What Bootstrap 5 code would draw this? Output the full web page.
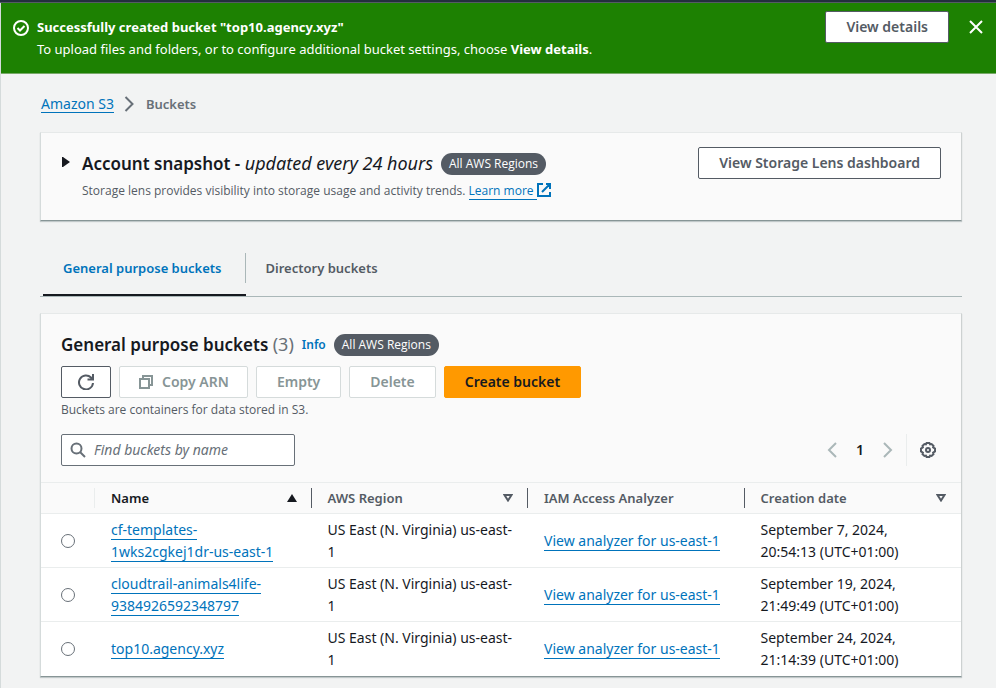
<!DOCTYPE html>
<html lang="en">
<head>
<meta charset="utf-8">
<meta name="viewport" content="width=device-width, initial-scale=1">
<title>S3 buckets</title>
<link href="https://cdn.jsdelivr.net/npm/bootstrap@5.3.0/dist/css/bootstrap.min.css" rel="stylesheet">
<style>
  body { font-family: "Noto Sans", "Open Sans", sans-serif; font-size: 14px; line-height: 22px; color: #16191f; background: #f2f3f3; }
  svg { display: block; flex: none; fill: none; stroke: currentColor; stroke-width: 2; }
  .console-bar { height: 3px; background: #232f3e; border-bottom: 1px solid #545b64; }
  .console-main { border-left: 1px solid #d5dbdb; min-height: calc(100vh - 3px); }
  .flash { background: #1d8102; color: #fff; padding: 13px 13px 13px 12px; border-bottom: 1px solid #78a968; font-size: 13px; }
  .flash-actions { margin-top: -5px; }
  .flash-close { color: #e3eee0; }
  .content-area { padding: 19px 34px 12px 39px; }
  .link-a { color: #0073bb; text-decoration: none; border-bottom: 1px solid #0073bb; }
  .link-a:hover { color: #0a4a74; }
  .crumbs { padding-left: 1px; margin-bottom: 17px; }
  .crumb-current { color: #687078; font-weight: 600; font-size: 13px; }
  .crumb-sep { color: #687078; }
  .btn-c { --bs-btn-font-size: 14px; --bs-btn-font-weight: 600; --bs-btn-line-height: 22px; --bs-btn-padding-y: 4px; --bs-btn-padding-x: 20px;
    --bs-btn-border-radius: 2px; --bs-btn-color: #545b64; --bs-btn-bg: #fff; --bs-btn-border-color: #545b64;
    --bs-btn-hover-color: #16191f; --bs-btn-hover-bg: #fafafa; --bs-btn-hover-border-color: #16191f;
    --bs-btn-disabled-color: #879596; --bs-btn-disabled-bg: #fff; --bs-btn-disabled-border-color: #d5dbdb; --bs-btn-disabled-opacity: 1; }
  .btn-copy { --bs-btn-padding-x: 18px; }
  .btn-create { --bs-btn-color: #16191f; --bs-btn-bg: #ff9900; --bs-btn-border-color: #ff9900; --bs-btn-hover-bg: #ec7211; --bs-btn-hover-border-color: #ec7211; }
  .btn-plain { border: 0; background: none; padding: 0; color: inherit; }
  .panel { background: #fafafa; border: 1px solid #e6e9e9; border-right-color: #cdd1d1; border-left-color: #d5dbdb; border-bottom-color: #879596; box-shadow: 0 1px 1px rgba(0,28,36,.2); }
  .panel-head { padding: 14px 20px 16px; }
  .expander { margin-top: 10px; }
  .title { font-size: 17px; line-height: 22px; font-weight: 600; margin: 0; }
  .title em { font-weight: 400; font-size: 18px; }
  .pill { background: #545b64; color: #fff; font-family: "Open Sans", sans-serif; font-size: 12px; line-height: 22px; padding: 0 8px; border-radius: 11px; font-weight: 500; }
  .desc { font-family: "Open Sans", sans-serif; font-size: 12px; line-height: 16px; color: #545b64; }
  .snapshot-title { margin: 5px 0 8px; }
  .tabs { margin-top: 24px; border-bottom: 1px solid #aab7b8; padding: 8px 0 0 3px; font-size: 13px; }
  .tab { padding: 0 23px 0 20px; font-weight: 600; color: #545b64; line-height: 30px; border-right: 1px solid #aab7b8; margin-bottom: 13px; }
  .tab-wrap:last-child .tab { border-right-color: transparent; }
  .tab-wrap.active .tab { color: #0073bb; }
  .tab-wrap.active { border-bottom: 2px solid #16191f; }
  .tab-wrap.active .tab { margin-bottom: 11px; }
  .buckets-panel { margin-top: 16px; }
  .buckets-head { padding: 19px 20px 16px; }
  .toolbar { margin-top: 10px; }
  .count { color: #687078; font-weight: 400; font-size: 18px; }
  .info { font-size: 12px; font-weight: 600; color: #0073bb; text-decoration: none; }
  .search { width: 234px; height: 32px; background: #fff; border: 1px solid #687078; border-radius: 2px; padding: 0 8px; color: #687078; }
  .search input { border: 0; outline: 0; background: none; font-size: 14px; color: #16191f; min-width: 0; }
  .search input::placeholder { font-style: italic; color: #687078; opacity: 1; }
  .pager { color: #aab7b8; }
  .pager-page { width: 46px; text-align: center; color: #16191f; font-weight: 600; }
  .settings { border-left: 1px solid #eaeded; color: #545b64; padding: 8px 5px 8px 13px; margin-left: 13px; }
  .bucket-table { table-layout: fixed; width: 100%; margin: 0; }
  .bucket-table th, .bucket-table td { padding: 5px 8px 4px 16px; vertical-align: middle; border-bottom: 1px solid #eaeded; }
  .bucket-table th { padding: 5px 0; border-top: 1px solid #eaeded; background: #fafafa; color: #545b64; font-size: 13px; font-weight: 600; }
  .bucket-table td { background: #fff; }
  .bucket-table tr:last-child td { border-bottom-color: #fff; }
  .bucket-table .pick { width: 54px; }
  .bucket-table td.pick { padding: 0 0 0 20px; }
  .head-cell { height: 20px; line-height: 20px; padding: 0 14px 0 16px; border-right: 1px solid #545b64; }
  .pick .head-cell { border-color: #eaeded; }
  th:last-child .head-cell { border-color: transparent; }
  .bucket-table .sorted { color: #16191f; }
  .pick input { display: block; width: 14px; height: 14px; margin: 0; appearance: none; border: 1px solid #687078; border-radius: 50%; background: #fff; }
  .pick input:checked { border: 4px solid #0073bb; }
</style>
<script src="https://cdn.jsdelivr.net/npm/bootstrap@5.3.0/dist/js/bootstrap.bundle.min.js"></script>
</head>
<body>
<div class="console-bar"></div>
<main class="console-main">
  <section class="flash d-flex align-items-start" role="status">
    <svg class="mt-1" width="16" height="16" viewBox="0 0 16 16"><circle cx="8" cy="8" r="7"/><path d="M4.500 8l2.500 2.500L11.500 6"/></svg>
    <div class="ms-2 flex-grow-1">
      <div class="fw-bold">Successfully created bucket "top10.agency.xyz"</div>
      <div>To upload files and folders, or to configure additional bucket settings, choose <b>View details</b>.</div>
    </div>
    <div class="flash-actions d-flex align-items-center">
      <button class="btn btn-c" type="button">View details</button>
      <button class="btn-plain flash-close ms-3 ps-1" type="button" aria-label="Dismiss"><svg width="14" height="14" viewBox="0 0 14 14"><path d="M1 1l12 12M13 1L1 13"/></svg></button>
    </div>
  </section>

  <div class="content-area">
    <nav class="crumbs d-flex align-items-center" aria-label="Breadcrumb">
      <a class="link-a lh-sm" href="#">Amazon S3</a>
      <svg class="crumb-sep mx-2" width="16" height="16" viewBox="0 0 16 16"><path d="M3.500 1l7 7-7 7"/></svg>
      <span class="crumb-current">Buckets</span>
    </nav>

    <section class="panel panel-head d-flex align-items-start">
      <button class="btn-plain expander" type="button" aria-label="Expand account snapshot"><svg width="9" height="10" viewBox="0 0 9 10"><path d="M1 0h1l7 5-7 5H1z" fill="currentColor" stroke="none"/></svg></button>
      <div class="ms-2 ps-1 flex-grow-1">
        <div class="snapshot-title d-flex align-items-center gap-2">
          <h2 class="title">Account snapshot - <em>updated every 24 hours</em></h2>
          <span class="pill">All AWS Regions</span>
        </div>
        <p class="desc d-flex mb-1">Storage lens provides visibility into storage usage and activity trends.&nbsp;<a class="link-a" href="#">Learn more&nbsp;</a>
          <a class="link-a border-0" href="#" aria-label="Opens in a new tab"><svg width="14" height="14" viewBox="0 0 14 14"><path d="M6 1H1v12h12V9M9 1h4v5M13 1L5 9"/></svg></a></p>
      </div>
      <button class="btn btn-c" type="button">View Storage Lens dashboard</button>
    </section>

    <ul class="tabs list-unstyled d-flex mb-0">
      <li class="tab-wrap active"><a class="tab d-block text-decoration-none" href="#">General purpose buckets</a></li>
      <li class="tab-wrap"><a class="tab d-block text-decoration-none" href="#">Directory buckets</a></li>
    </ul>

    <section class="panel buckets-panel">
      <div class="buckets-head">
        <div class="d-flex align-items-center gap-2">
          <h2 class="title">General purpose buckets <span class="count">(3)</span></h2>
          <a class="info" href="#">Info</a>
          <span class="pill">All AWS Regions</span>
        </div>
        <div class="toolbar d-flex gap-2">
          <button class="btn btn-c px-3" type="button" aria-label="Refresh"><svg width="16" height="16" viewBox="0 0 16 16"><path d="M15 9a7 7 0 1 1-2-5.500L14.500 5M15 0v5.500H9.500"/></svg></button>
          <button class="btn btn-c btn-copy d-flex align-items-center gap-2" type="button" disabled><svg width="16" height="16" viewBox="0 0 16 16"><path d="M2 5h9v9H2zM5 5V2h9v9h-3"/></svg>Copy ARN</button>
          <button class="btn btn-c" type="button" disabled>Empty</button>
          <button class="btn btn-c" type="button" disabled>Delete</button>
          <button class="btn btn-c btn-create" type="button">Create bucket</button>
        </div>
        <p class="desc mt-1 mb-3">Buckets are containers for data stored in S3.</p>
        <div class="d-flex align-items-center justify-content-between">
          <label class="search d-flex align-items-center gap-2">
            <svg width="16" height="16" viewBox="0 0 16 16"><circle cx="6.500" cy="6.500" r="5"/><path d="M10 10l5 5"/></svg>
            <input class="flex-grow-1 p-0" type="text" placeholder="Find buckets by name" aria-label="Find buckets by name">
          </label>
          <div class="pager d-flex align-items-center">
            <button class="btn-plain" type="button" aria-label="Previous page"><svg width="10" height="16" viewBox="0 0 10 16"><path d="M9 1L2 8l7 7"/></svg></button>
            <span class="pager-page">1</span>
            <button class="btn-plain" type="button" aria-label="Next page"><svg width="10" height="16" viewBox="0 0 10 16"><path d="M1 1l7 7-7 7"/></svg></button>
            <button class="btn-plain" type="button" aria-label="Preferences"><span class="settings d-block"><svg width="16" height="16" viewBox="0 0 16 16"><path d="M6.600 1h2.800l.7 1.400 1.500-.4 1.900 1.900-.4 1.500 1.900 1.200v2.800l-1.900 1.200.4 1.500-1.900 1.900-1.500-.4L9.400 15H6.600l-.7-1.400-1.500.4-1.900-1.900.4-1.500L1 9.400V6.600l1.900-1.200-.4-1.500L4.400 2l1.500.4z"/><circle cx="8" cy="8" r="2"/></svg></span></button>
          </div>
        </div>
      </div>

      <table class="bucket-table">
        <thead>
          <tr>
            <th class="pick" scope="col" aria-label="Select"><div class="head-cell"></div></th>
            <th class="sorted" scope="col"><div class="head-cell d-flex align-items-center justify-content-between">Name<svg width="10" height="8" viewBox="0 0 10 8"><path d="M5 0l5 8H0z" fill="currentColor" stroke="none"/></svg></div></th>
            <th scope="col"><div class="head-cell d-flex align-items-center justify-content-between">AWS Region<svg width="10" height="8" viewBox="0 0 10 8"><path d="M1.500 1h7L5 6.500z"/></svg></div></th>
            <th scope="col"><div class="head-cell">IAM Access Analyzer</div></th>
            <th scope="col"><div class="head-cell d-flex align-items-center justify-content-between">Creation date<svg width="10" height="8" viewBox="0 0 10 8"><path d="M1.500 1h7L5 6.500z"/></svg></div></th>
          </tr>
        </thead>
        <tbody>
          <tr>
            <td class="pick"><input type="radio" name="bucket" aria-label="cf-templates-1wks2cgkej1dr-us-east-1"></td>
            <td><a class="link-a" href="#">cf-templates-<br>1wks2cgkej1dr-us-east-1</a></td>
            <td>US East (N. Virginia) us-east-<br>1</td>
            <td><a class="link-a" href="#">View analyzer for us-east-1</a></td>
            <td>September 7, 2024,<br>20:54:13 (UTC+01:00)</td>
          </tr>
          <tr>
            <td class="pick"><input type="radio" name="bucket" aria-label="cloudtrail-animals4life-9384926592348797"></td>
            <td><a class="link-a" href="#">cloudtrail-animals4life-<br>9384926592348797</a></td>
            <td>US East (N. Virginia) us-east-<br>1</td>
            <td><a class="link-a" href="#">View analyzer for us-east-1</a></td>
            <td>September 19, 2024,<br>21:49:49 (UTC+01:00)</td>
          </tr>
          <tr>
            <td class="pick"><input type="radio" name="bucket" aria-label="top10.agency.xyz"></td>
            <td><a class="link-a" href="#">top10.agency.xyz</a></td>
            <td>US East (N. Virginia) us-east-<br>1</td>
            <td><a class="link-a" href="#">View analyzer for us-east-1</a></td>
            <td>September 24, 2024,<br>21:14:39 (UTC+01:00)</td>
          </tr>
        </tbody>
      </table>
    </section>
  </div>
</main>
</body>
</html>
